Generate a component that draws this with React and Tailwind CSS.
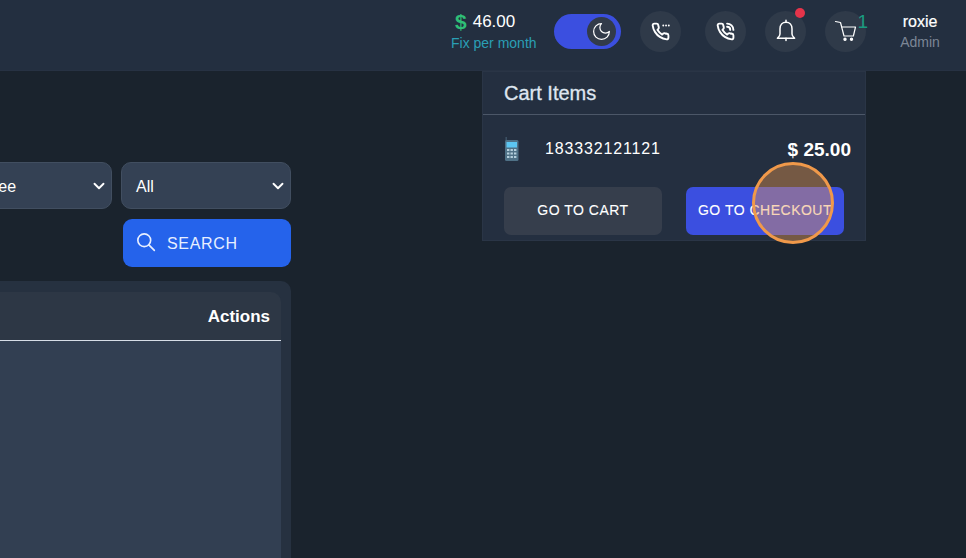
import React from 'react';
import { ChevronDown } from 'lucide-react';

const sans = "font-['Liberation_Sans',Arial,sans-serif]";

const handset = "M22 16.9v3a2 2 0 0 1-2.2 2 19.8 19.8 0 0 1-8.6-3.1 19.5 19.5 0 0 1-6-6A19.8 19.8 0 0 1 2.1 4.2 2 2 0 0 1 4.1 2h3a2 2 0 0 1 2 1.7c.1 1 .4 1.9.7 2.8a2 2 0 0 1-.5 2.1L8.1 9.9a16 16 0 0 0 6 6l1.3-1.3a2 2 0 0 1 2.1-.4c.9.3 1.8.6 2.8.7a2 2 0 0 1 1.7 2z";

const Icon = ({ size = 24, width = 2, children }) => (
  <svg width={size} height={size} viewBox="0 0 24 24" fill="none" stroke="currentColor" strokeWidth={width} strokeLinecap="round" strokeLinejoin="round">
    {children}
  </svg>
);

const PhoneDots = () => (
  <Icon size={19} width={2.4}>
    <path d={handset} />
    <path d="M15.5 4.5h.01M19 4.5h.01M22.5 4.5h.01" />
  </Icon>
);

const PhoneWaves = () => (
  <Icon size={19} width={2.4}>
    <path d={handset} />
    <path d="M14 2a8 8 0 0 1 8 8M14 6a4 4 0 0 1 4 4" />
  </Icon>
);

const BellIcon = () => (
  <Icon size={24} width={1.5}>
    <path d="M12 3.2c-3.6 0-6 2.8-6 6.5v5.2c0 2-1.3 3.1-2.6 4.3h17.2c-1.3-1.2-2.6-2.3-2.6-4.3V9.7c0-3.7-2.4-6.5-6-6.5z" />
    <path d="M12 1.2v2M12 19.2v2.4" />
  </Icon>
);

const CartIcon = () => (
  <Icon size={24} width={1.2}>
    <path d="M1.5 2.5l5 1L10 17h9.5" />
    <path d="M8 8h13.5l-2 8.5" />
    <circle cx="11" cy="20.3" r="1.1" fill="currentColor" />
    <circle cx="17.5" cy="20.3" r="1.1" fill="currentColor" />
  </Icon>
);

const RoundIcon = ({ children }) => (
  <div className="w-[41px] h-[41px] rounded-full bg-[#2f3a49] flex items-center justify-center text-white shrink-0">
    {children}
  </div>
);

const Handset = () => (
  <svg viewBox="0 0 14 24" className="w-[15px] h-[24px]">
    <rect x="1" y="0" width="1.4" height="4" fill="#3f5568" />
    <rect x="0.5" y="3" width="13.5" height="21" rx="1.5" fill="#4f7186" />
    <rect x="2" y="5" width="10.5" height="5.5" fill="#5cc6f2" />
    <g fill="#b5cfdc">
      <rect x="2.5" y="12" width="2.4" height="2" />
      <rect x="6" y="12" width="2.4" height="2" />
      <rect x="9.5" y="12" width="2.4" height="2" />
      <rect x="2.5" y="15.5" width="2.4" height="2" />
      <rect x="6" y="15.5" width="2.4" height="2" />
      <rect x="9.5" y="15.5" width="2.4" height="2" />
      <rect x="2.5" y="19" width="2.4" height="2" />
      <rect x="6" y="19" width="2.4" height="2" />
      <rect x="9.5" y="19" width="2.4" height="2" />
    </g>
  </svg>
);

const Header = () => (
  <header className="h-[71px] bg-[#232f40] border-b border-[#273243] flex items-center justify-end shrink-0">
    <div className="flex items-center pb-2">
      <div className="w-[84px] mr-[19px] pt-[1px] shrink-0">
        <div className="flex items-center pl-[4px] gap-[6px] h-[22px]">
          <span className="text-[#2fbf77] font-bold text-[21px] leading-none">$</span>
          <span className="text-white text-[17px] leading-none">46.00</span>
        </div>
        <div className="mt-[1px] text-[#2a9fb5] text-[14px] leading-[20px] whitespace-nowrap">Fix per month</div>
      </div>
      <div className="w-[67px] h-[35px] rounded-full bg-[#3b4fe0] flex items-center justify-end pr-[5px] mr-[19px] shrink-0">
        <div className="w-[29px] h-[29px] rounded-full bg-[#323b4a] flex items-center justify-center text-white">
          <Icon size={21} width={1.4}>
            <path d="M12 3a6 6 0 0 0 9 9 9 9 0 1 1-9-9Z" />
          </Icon>
        </div>
      </div>
      <div className="mr-[24px]"><RoundIcon><PhoneDots /></RoundIcon></div>
      <div className="mr-[19px]"><RoundIcon><PhoneWaves /></RoundIcon></div>
      <div className="relative mr-[19px]">
        <RoundIcon><BellIcon /></RoundIcon>
        <span className="absolute top-[-3px] right-[1px] w-[10px] h-[10px] rounded-full bg-[#e5344a]" />
      </div>
      <div className="relative mr-[24px]">
        <RoundIcon><CartIcon /></RoundIcon>
        <span className="absolute top-[0px] right-[-2px] text-[#1a9a80] text-[19px] leading-[22px]">1</span>
      </div>
      <div className="w-[60px] mr-[16px] pt-[2px] pb-[2px] text-center shrink-0">
        <div className="text-white text-[16px] leading-[22px] [-webkit-text-stroke:0.2px]">roxie</div>
        <div className="text-[#7c8696] text-[14px] leading-[18px]">Admin</div>
      </div>
    </div>
  </header>
);

const Select = ({ label, className }) => (
  <div className={"h-[47px] rounded-[10px] bg-[#344154] border border-[#414e60] flex items-center justify-between pl-[14px] pr-[3px] text-white text-[16px] shrink-0 " + className}>
    <span className="pt-[2px]">{label}</span>
    <ChevronDown size={18} strokeWidth={2.5} />
  </div>
);

const CartMenu = () => (
  <div className="absolute left-[482px] top-[71px] w-[384px] h-[170px] bg-[#242f40] border border-[#2a3546]">
    <div className="h-[43px] border-b border-[#4c5768] pl-[21px] pt-[9px] text-[#dfe6f0] text-[20px] leading-[24px] [-webkit-text-stroke:0.3px]">
      Cart Items
    </div>
    <div className="flex items-start justify-between pl-[21px] pr-[14px] pt-[20px] h-[72px]">
      <div className="flex items-start">
        <div className="mt-[2px] w-[41px]"><Handset /></div>
        <span className="mt-[2px] text-white text-[16px] leading-[24px] tracking-[0.85px]">183332121121</span>
      </div>
      <span className="mt-[1px] text-white text-[19px] leading-[28px] font-bold">$ 25.00</span>
    </div>
    <div className="flex justify-between pl-[21px] pr-[21px]">
      <button className="w-[158px] h-[48px] pb-[2px] rounded-[7px] bg-[#363e4c] text-white text-[14px] tracking-[0.5px] [-webkit-text-stroke:0.1px]">GO TO CART</button>
      <button className="w-[158px] h-[48px] pb-[2px] rounded-[7px] bg-[#3b4fe0] text-white text-[14px] tracking-[0.5px] [-webkit-text-stroke:0.1px]">GO TO CHECKOUT</button>
    </div>
  </div>
);

export default function App() {
  return (
    <div className={"relative w-[966px] h-[558px] overflow-hidden bg-[#1a232d] flex flex-col " + sans}>
      <Header />
      <main className="flex-1 w-[291px] flex flex-col items-end pt-[91px]">
        <div className="flex justify-end gap-[9px]">
          <Select label="Employee" className="w-[182px]" />
          <Select label="All" className="w-[170px]" />
        </div>
        <button className="mt-[10px] w-[168px] h-[48px] rounded-[9px] bg-[#2563eb] flex items-center pl-[13px] gap-[9px] text-[#e8efff] text-[16px] tracking-[0.7px] shrink-0">
          <Icon size={22} width={1.8}>
            <circle cx="9" cy="9" r="7" />
            <path d="M14 14l6 6" />
          </Icon>
          <span className="pt-[2px]">SEARCH</span>
        </button>
        <div className="mt-[14px] w-[400px] flex-1 bg-[#263140] rounded-t-[10px] pt-[11px] pr-[10px] flex flex-col">
          <div className="h-[49px] pt-[2px] pr-[11px] bg-[#2d3745] border-b border-[#d6dde6] rounded-t-[10px] flex items-center justify-end text-white font-bold text-[17px] shrink-0">
            Actions
          </div>
          <div className="flex-1 bg-[#323f52]" />
        </div>
      </main>
      <CartMenu />
      {/* click highlight from the screen recording */}
      <div className="absolute left-[752px] top-[162px] w-[82px] h-[82px] rounded-full border-[3px] border-[#f0994a] bg-[#f0994a]/40" />
    </div>
  );
}
